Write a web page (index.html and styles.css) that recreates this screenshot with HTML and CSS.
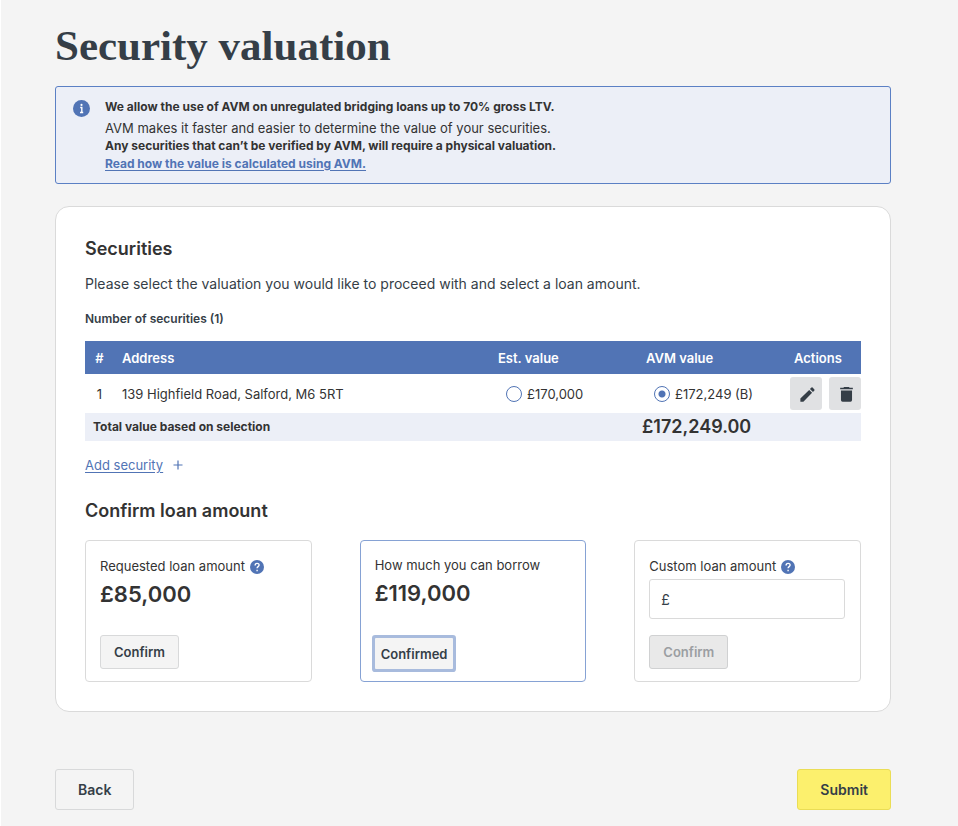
FILE: index.html
```
<!DOCTYPE html>
<html lang="en">
<head>
  <meta charset="utf-8">
  <meta name="viewport" content="width=device-width,initial-scale=1.0">
  <title>Security valuation</title>
  <link rel="stylesheet" href="styles.css">
</head>
<body>
  <main class="page">
    <h1>Security valuation</h1>

    <div class="notice">
      <svg class="notice-icon" viewBox="0 0 16 16" aria-hidden="true">
        <circle cx="8" cy="8" r="8" fill="#5174b5"/>
        <circle cx="8" cy="4.6" r="1" fill="#fff"/>
        <path d="M6.800 7h1.500v4.800M6.600 11.800h3" fill="none" stroke="#fff" stroke-width="1.300"/>
      </svg>
      <div>
        <p class="notice-title">We allow the use of AVM on unregulated bridging loans up to 70% gross LTV.</p>
        <p>AVM makes it faster and easier to determine the value of your securities.</p>
        <p class="strong">Any securities that can’t be verified by AVM, will require a physical valuation.</p>
        <p class="strong"><a href="#">Read how the value is calculated using AVM.</a></p>
      </div>
    </div>

    <section class="card">
      <h2>Securities</h2>
      <p class="intro">Please select the valuation you would like to proceed with and select a loan amount.</p>
      <h3>Number of securities (1)</h3>

      <table class="securities">
        <colgroup>
          <col class="col-number">
          <col>
          <col class="col-value">
          <col class="col-value">
          <col class="col-actions">
        </colgroup>
        <thead>
          <tr>
            <th class="number">#</th>
            <th class="address">Address</th>
            <th>Est. value</th>
            <th>AVM value</th>
            <th>Actions</th>
          </tr>
        </thead>
        <tbody>
          <tr>
            <td class="number">1</td>
            <td class="address">139 Highfield Road, Salford, M6 5RT</td>
            <td class="value"><label class="option"><input type="radio" name="valuation">£170,000</label></td>
            <td class="value"><label class="option"><input type="radio" name="valuation" checked>£172,249 (B)</label></td>
            <td class="actions">
              <div class="action-buttons">
                <button type="button" class="icon-button" aria-label="Edit">
                  <svg viewBox="0 0 24 24"><path d="M3 17.200V21h3.800L17.800 9.900l-3.700-3.700L3 17.200zM20.700 7c.4-.4.4-1 0-1.400l-2.300-2.300a1 1 0 0 0-1.400 0l-1.900 1.800 3.800 3.800L20.700 7z"/></svg>
                </button>
                <button type="button" class="icon-button" aria-label="Delete">
                  <svg viewBox="0 0 24 24"><path d="M5 7v12a2 2 0 0 0 2 2h10a2 2 0 0 0 2-2V7zM20 3.500h-4l-1-1H9l-1 1H4v2h16z"/></svg>
                </button>
              </div>
            </td>
          </tr>
        </tbody>
        <tfoot>
          <tr>
            <td colspan="3">Total value based on selection</td>
            <td colspan="2" class="total">£172,249.00</td>
          </tr>
        </tfoot>
      </table>

      <div class="add-security">
        <a href="#">Add security</a>
        <svg viewBox="0 0 10 10" aria-hidden="true"><path d="M5 0.500v9M0.500 5h9" stroke="#5174b5" stroke-width="1.200"/></svg>
      </div>

      <h2>Confirm loan amount</h2>
      <div class="loans">
        <div class="loan">
          <div class="loan-label">Requested loan amount
            <svg class="help" viewBox="0 0 14 14" aria-hidden="true"><circle cx="7" cy="7" r="7" fill="#5174b5"/><path d="M5.100 5.400c0-2.700 4-2.600 4-.3 0 1.500-2 1.500-2 3.200M7.100 9.700v1.500" fill="none" stroke="#fff" stroke-width="1.400"/></svg>
          </div>
          <div class="amount">£85,000</div>
          <button type="button" class="button">Confirm</button>
        </div>
        <div class="loan selected">
          <div class="loan-label">How much you can borrow</div>
          <div class="amount">£119,000</div>
          <button type="button" class="button confirmed">Confirmed</button>
        </div>
        <div class="loan">
          <div class="loan-label">
            <label for="custom-amount">Custom loan amount</label>
            <svg class="help" viewBox="0 0 14 14" aria-hidden="true"><circle cx="7" cy="7" r="7" fill="#5174b5"/><path d="M5.100 5.400c0-2.700 4-2.600 4-.3 0 1.500-2 1.500-2 3.200M7.100 9.700v1.500" fill="none" stroke="#fff" stroke-width="1.400"/></svg>
          </div>
          <input type="text" id="custom-amount" class="amount-input" value="£">
          <button type="button" class="button" disabled>Confirm</button>
        </div>
      </div>
    </section>

    <div class="page-buttons">
      <button type="button" class="button large">Back</button>
      <button type="submit" class="button large submit">Submit</button>
    </div>
  </main>
</body>
</html>
```
FILE: styles.css
```
* {
  box-sizing: border-box;
}

body {
  margin: 0;
  background: #f4f4f4;
  border-left: 1px solid #fff;
  color: #333;
  font-family: Inter, "Liberation Sans", sans-serif;
  font-size: 13px;
  line-height: 18px;
}

h1, h2, h3, p {
  margin: 0;
}

a {
  color: #5174b5;
  text-underline-offset: 2px;
}

.page {
  padding: 22px 67px 16px 54px;
}

h1 {
  margin-bottom: 16px;
  color: #353e47;
  font-family: "Liberation Serif", serif;
  font-size: 43px;
  line-height: 48px;
}

h2 {
  font-size: 18px;
  font-weight: 600;
  line-height: 24px;
}

h3 {
  margin-bottom: 13px;
  color: #353e47;
  font-size: 12px;
  font-weight: 600;
}

.strong {
  font-size: 12px;
  font-weight: 700;
}

/* Info box */
.notice {
  display: flex;
  gap: 15px;
  padding: 11px 17px 10px;
  border: 1px solid #5b80c4;
  border-radius: 3px;
  background: #eceff7;
}

.notice-icon {
  flex: none;
  width: 17px;
  height: 17px;
  margin-top: 2px;
}

.notice-title {
  margin-bottom: 3px;
  font-size: 12px;
  font-weight: 700;
}

.card {
  margin-top: 22px;
  padding: 30px 29px 29px;
  border: 1px solid #dadada;
  border-radius: 14px;
  background: #fff;
}

.intro {
  margin: 14px 0 17px;
  color: #353e47;
  font-size: 14px;
}

/* Securities table */
.securities {
  width: 100%;
  border-collapse: collapse;
  table-layout: fixed;
}

.col-number {
  width: 29px;
}

.col-value {
  width: 148px;
}

.col-actions {
  width: 75px;
}

.securities th {
  height: 33px;
  padding: 0 8px;
  background: #5174b5;
  color: #fff;
  font-weight: 600;
  text-align: left;
}

.securities td {
  height: 39px;
  padding: 0 8px;
}

.securities .number {
  padding: 0;
  text-align: center;
}

.securities .value {
  padding-left: 16px;
}

.securities .actions {
  padding: 0;
}

.securities tfoot td {
  height: 28px;
  background: #eceff7;
  font-size: 12px;
  font-weight: 700;
}

.securities tfoot .total {
  padding: 0 4px;
  font-size: 18px;
  font-weight: 600;
}

.option {
  display: flex;
  align-items: center;
  gap: 5px;
}

.option input {
  appearance: none;
  width: 16px;
  height: 16px;
  margin: 0;
  border: 1px solid #5174b5;
  border-radius: 50%;
  background: #fff;
}

.option input:checked {
  background: radial-gradient(circle, #5174b5 3px, #fff 4px);
}

.action-buttons {
  display: flex;
  justify-content: flex-end;
  gap: 7px;
}

.icon-button {
  display: flex;
  align-items: center;
  justify-content: center;
  width: 32px;
  height: 33px;
  padding: 2px 0 0 3px;
  border: 0;
  border-radius: 3px;
  background: #e0e1e3;
}

.icon-button svg {
  width: 19px;
  height: 19px;
  fill: #353e47;
}

.add-security {
  display: flex;
  align-items: center;
  gap: 10px;
  margin: 15px 0 25px;
}

.add-security svg {
  width: 10px;
  height: 10px;
}

/* Loan amounts */
.loans {
  display: grid;
  grid-template-columns: repeat(3, 1fr);
  gap: 48px;
  margin-top: 17px;
}

.loan {
  display: flex;
  flex-direction: column;
  align-items: flex-start;
  min-height: 142px;
  padding: 15px 15px 12px 14px;
  border: 1px solid #dadada;
  border-radius: 4px;
}

.loan.selected {
  padding-top: 14px;
  border-color: #86a2d4;
}

.loan-label {
  display: flex;
  align-items: center;
  gap: 5px;
  height: 20px;
}

.help {
  width: 14px;
  height: 14px;
  margin-top: 2px;
}

.amount {
  margin-top: 4px;
  font-size: 22px;
  font-weight: 600;
  line-height: 28px;
}

.amount-input {
  width: 100%;
  height: 40px;
  margin-top: 3px;
  padding: 0 11px;
  border: 1px solid #dadada;
  border-radius: 3px;
  color: #353e47;
  font-family: inherit;
  font-size: 14px;
}

.button {
  height: 34px;
  padding: 0 13px;
  border: 1px solid #d8d9da;
  border-radius: 3px;
  background: #f4f4f4;
  color: #353e47;
  font-family: inherit;
  font-size: 13px;
  font-weight: 600;
}

.loan .button {
  margin-top: auto;
}

.button:disabled {
  border-color: #d0d1d2;
  background: #e9e9e9;
  color: #9b9ea2;
}

.button.confirmed {
  height: 31px;
  padding: 0 6px;
  border: 0;
  border-radius: 1px;
  box-shadow: 0 0 0 3px #a8bbdd;
}

.page-buttons {
  display: flex;
  justify-content: space-between;
  margin-top: 57px;
}

.button.large {
  height: 41px;
  padding: 0 22px;
  font-size: 14px;
}

.button.submit {
  border-color: #eadd55;
  background: #fcf06d;
}
```
